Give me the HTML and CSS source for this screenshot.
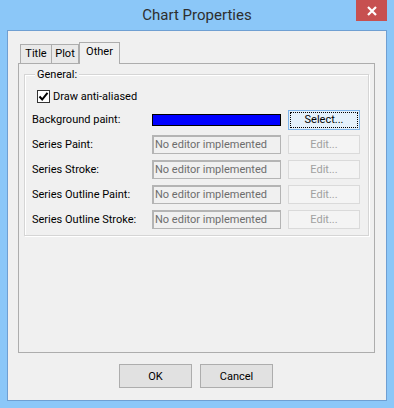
FILE: index.html
```html
<!DOCTYPE html>
<html lang="en">
<head>
    <meta charset="UTF-8">
    <title>Chart Properties</title>
    <link rel="stylesheet" href="styles.css">
</head>
<body>
    <div class="window">
        <div class="titlebar">
            <span></span>
            <div class="title">Chart Properties</div>
            <div class="close">
                <svg width="12" height="10" viewBox="0 0 12 10">
                    <path d="M2 1 L10 9 M10 1 L2 9" stroke="#fff" stroke-width="2.2"/>
                </svg>
            </div>
        </div>

        <div class="client">
            <div class="tabs">
                <div class="tab tab-title">Title</div>
                <div class="tab tab-plot">Plot</div>
                <div class="tab tab-other active">Other</div>
            </div>

            <div class="panel">
                <div class="group">
                    <div class="legend">General:</div>

                    <div class="check-row">
                        <span class="checkbox">
                            <svg width="11" height="11" viewBox="0 0 11 11">
                                <path d="M1.5 5.5 L4.2 8.5 L9.5 1.8" fill="none" stroke="#000" stroke-width="2"/>
                            </svg>
                        </span>
                        <span>Draw anti-aliased</span>
                    </div>

                    <div class="props">
                        <span class="prop-label">Background paint:</span>
                        <span class="swatch"></span>
                        <button class="btn focus">Select...</button>

                        <span class="prop-label">Series Paint:</span>
                        <span class="field">No editor implemented</span>
                        <button class="btn" disabled>Edit...</button>

                        <span class="prop-label">Series Stroke:</span>
                        <span class="field">No editor implemented</span>
                        <button class="btn" disabled>Edit...</button>

                        <span class="prop-label">Series Outline Paint:</span>
                        <span class="field">No editor implemented</span>
                        <button class="btn" disabled>Edit...</button>

                        <span class="prop-label">Series Outline Stroke:</span>
                        <span class="field">No editor implemented</span>
                        <button class="btn" disabled>Edit...</button>
                    </div>
                </div>
            </div>

            <div class="actions">
                <button class="dlg-btn">OK</button>
                <button class="dlg-btn">Cancel</button>
            </div>
        </div>
    </div>
</body>
</html>
```

FILE: styles.css
```css
/* Reset */
* {
    box-sizing: border-box;
    margin: 0;
    padding: 0;
}

body {
    font-family: Roboto, "Liberation Sans", sans-serif;
    font-size: 11px;
    background-color: #8bc7f8;
}

/* Window frame */
.window {
    width: 394px;
    height: 408px;
    background-color: #8bc7f8;
    display: flex;
    flex-direction: column;
}

.titlebar {
    height: 30px;
    flex-shrink: 0;
    display: grid;
    grid-template-columns: 1fr auto 1fr;
}

.title {
    font-size: 15px;
    color: #2e2e2e;
    line-height: 30px;
}

.close {
    justify-self: end;
    width: 31px;
    height: 21px;
    margin-right: 7px;
    background-color: #c75050;
    display: flex;
    justify-content: center;
    align-items: center;
}

/* Client area */
.client {
    flex: 1;
    margin: 0 7px 7px 7px;
    border: 1px solid #6f9fd2;
    background-color: #f0f0f0;
    padding: 11px 11px 12px 10px;
    display: flex;
    flex-direction: column;
}

/* Tabs */
.tabs {
    height: 21px;
    flex-shrink: 0;
    display: flex;
    align-items: flex-end;
    padding-left: 2px;
}

.tab {
    height: 19px;
    line-height: 18px;
    text-align: center;
    border: 1px solid #adadad;
    border-bottom: none;
    background-color: #e9e9e9;
}

.tab + .tab {
    border-left: none;
}

.tab-title {
    width: 32px;
}

.tab-plot {
    width: 27px;
}

.tab.active {
    position: relative;
    z-index: 1;
    width: 41px;
    height: 22px;
    margin-bottom: -1px;
    line-height: 17px;
    background-color: #f0f0f0;
    border-left: 1px solid #adadad;
}

.panel {
    height: 290px;
    flex-shrink: 0;
    border: 1px solid #adadad;
    padding: 10px 5px 5px 5px;
}

/* Group box */
.group {
    border: 1px solid #d5d5d5;
    box-shadow: 1px 1px 0 #fff, inset 1px 1px 0 #fff;
    padding: 0 8px 3px 7px;
}

.legend {
    width: max-content;
    height: 15px;
    line-height: 15px;
    margin: -8px 0 0 3px;
    padding: 0 2px;
    background-color: #f0f0f0;
}

.check-row {
    height: 21px;
    margin-top: 4px;
    display: flex;
    align-items: center;
    gap: 3px;
    padding-left: 5px;
}

.checkbox {
    width: 13px;
    height: 13px;
    border: 1px solid #333;
    background-color: #fff;
    display: flex;
    justify-content: center;
    align-items: center;
}

.props {
    display: grid;
    grid-template-columns: 120px 129px 79px;
    grid-auto-rows: 25px;
    align-items: center;
}

.swatch {
    height: 12px;
    border: 1px solid #000;
    background-color: #0000ff;
}

.field {
    height: 19px;
    line-height: 15px;
    padding-left: 1px;
    border: 1px solid #b4b4b4;
    border-width: 2px 1px 1px 2px;
    color: #6d6d6d;
    white-space: nowrap;
    overflow: hidden;
}

.btn {
    justify-self: end;
    width: 72px;
    height: 19px;
    font: inherit;
    background-color: #f4f4f4;
    border: 1px solid #dadada;
    color: #a0a0a0;
}

.btn.focus {
    height: 20px;
    color: #000;
    background-color: #e5f1fb;
    border-color: #7eb4ea;
    outline: 1px dotted #000;
    outline-offset: -3px;
}

/* Dialog buttons */
.actions {
    margin-top: 11px;
    display: flex;
    justify-content: center;
    gap: 8px;
    padding-right: 1px;
}

.dlg-btn {
    width: 73px;
    height: 24px;
    font: inherit;
    background-color: #e1e1e1;
    border: 1px solid #adadad;
    color: #000;
}
```
